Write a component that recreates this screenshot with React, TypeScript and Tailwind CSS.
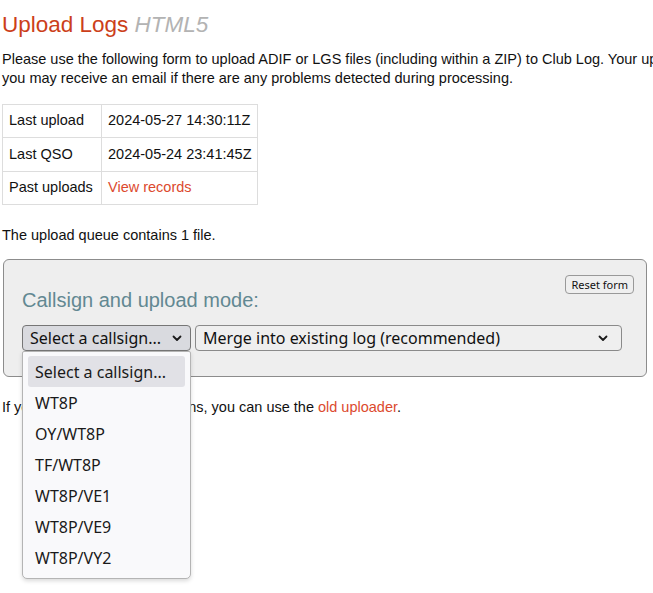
import React from "react";

const callsigns = ["WT8P", "OY/WT8P", "TF/WT8P", "WT8P/VE1", "WT8P/VE9", "WT8P/VY2"];

function Chevron() {
  return (
    <svg width="10" height="7" viewBox="0 0 10 7" fill="none" className="shrink-0">
      <path d="M1.5 1.5L5 5l3.5-3.5" stroke="#1a1a1a" strokeWidth="1.8" strokeLinecap="round" strokeLinejoin="round" />
    </svg>
  );
}

export default function App() {
  const uiFont = "font-['Noto_Sans',sans-serif]";
  const cell = "whitespace-nowrap border border-[#ddd] px-[6px]";

  return (
    <div className="h-[593px] w-full overflow-hidden bg-white font-['Liberation_Sans',Arial,sans-serif] text-[14.5px] text-[#111]">
      <div className="pl-[2px] pt-[12px]">
        <h1 className="text-[22.5px] leading-[25px] font-normal text-[#cc3f1a]">
          Upload Logs <span className="italic text-[#b3b3b3]">HTML5</span>
        </h1>

        <p className="mt-[13px] whitespace-nowrap leading-[19px]">
          Please use the following form to upload ADIF or LGS files (including within a ZIP) to Club Log. Your uploads will be processed shortly and
          <br />
          you may receive an email if there are any problems detected during processing.
        </p>

        <table className="mt-[16px] w-[255px] table-fixed border-collapse">
          <colgroup>
            <col className="w-[99px]" />
            <col className="w-[156px]" />
          </colgroup>
          <tbody>
            <tr className="h-[33px]">
              <td className={cell}>Last upload</td>
              <td className={cell}>2024-05-27 14:30:11Z</td>
            </tr>
            <tr className="h-[34px]">
              <td className={cell}>Last QSO</td>
              <td className={cell}>2024-05-24 23:41:45Z</td>
            </tr>
            <tr className="h-[33px]">
              <td className={cell}>Past uploads</td>
              <td className={`${cell} text-[#dc4a2e]`}>View records</td>
            </tr>
          </tbody>
        </table>

        <p className="mt-[20px] leading-[20px]">The upload queue contains 1 file.</p>

        <div className="mt-[14px] ml-px w-[644px] rounded-[6px] border border-[#8c8c8c] bg-[#eeeeee] px-[18px] pt-[15px] pb-[25px]">
          <div className="flex items-start justify-between">
            <h2 className="mt-[14px] text-[20px] leading-[23px] font-normal text-[#628892]">Callsign and upload mode:</h2>
            <button className={`mr-[-6px] h-[19px] rounded-[4px] border border-[#999] bg-[#efefef] px-[5px] text-[11px] leading-[17px] text-[#111] ${uiFont}`}>
              Reset form
            </button>
          </div>

          <div className={`mt-[13px] flex gap-[4px] text-[16px] ${uiFont}`}>
            <div className="relative">
              <div className="flex h-[26px] w-[169px] items-center justify-between rounded-[4px] border border-[#767676] bg-[#d9dadf] pl-[7px] pr-[8px]">
                <span className="leading-none">Select a callsign...</span>
                <Chevron />
              </div>
              <div className="absolute left-0 top-[26px] z-10 w-[169px] rounded-b-[5px] rounded-t-[2px] border border-[#b4b4b4] bg-[#f9f9fb] px-[5px] pt-[4px] pb-[5px] shadow-[0_2px_4px_rgba(0,0,0,0.15)]">
                <div className="flex h-[31px] items-center rounded-[3px] bg-[#e1e1e6] pl-[7px] text-[#1a1a1a]">Select a callsign...</div>
                {callsigns.map((c) => (
                  <div key={c} className="flex h-[31px] items-center pl-[7px] text-[#1a1a1a]">
                    {c}
                  </div>
                ))}
              </div>
            </div>
            <div className="flex h-[26px] w-[427px] items-center justify-between rounded-[4px] border border-[#8a8a8a] bg-[#efefef] pl-[7px] pr-[13px]">
              <span className="leading-none">Merge into existing log (recommended)</span>
              <Chevron />
            </div>
          </div>
        </div>

        <p className="mt-[20px] leading-[20px]">
          If you have any other questions, you can use the <span className="text-[#dc4a2e]">old uploader</span>.
        </p>
      </div>
    </div>
  );
}
